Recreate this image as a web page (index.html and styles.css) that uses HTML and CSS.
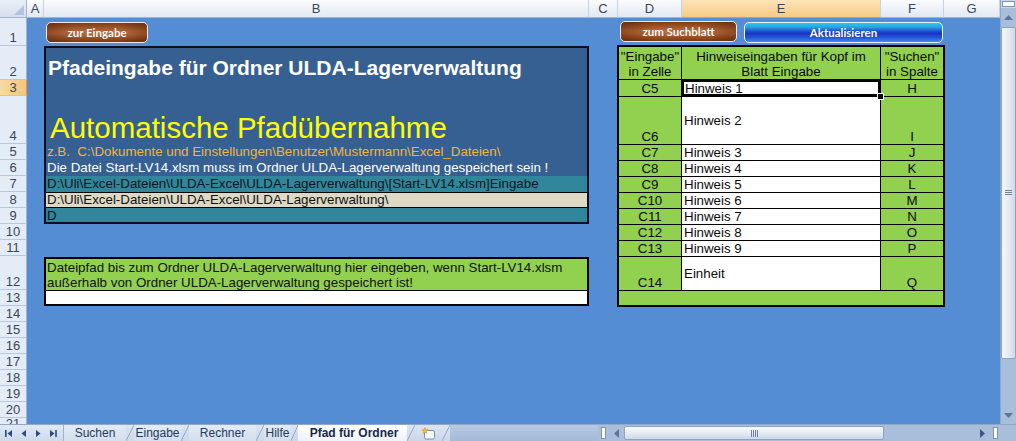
FILE: index.html
```html
<!DOCTYPE html>
<html lang="de">
<head>
<meta charset="utf-8">
<title>Pfad für Ordner</title>
<link rel="stylesheet" href="styles.css">
</head>
<body>
<div class="excel">
  <div class="main">
    <div class="sheet">
      <div class="corner"><span class="corner-tri"></span></div>
      <div class="ch">A</div>
      <div class="ch">B</div>
      <div class="ch">C</div>
      <div class="ch">D</div>
      <div class="ch sel">E</div>
      <div class="ch">F</div>
      <div class="ch">G</div>

      <div class="rh">1</div>
      <div class="rh">2</div>
      <div class="rh sel">3</div>
      <div class="rh">4</div>
      <div class="rh">5</div>
      <div class="rh">6</div>
      <div class="rh">7</div>
      <div class="rh">8</div>
      <div class="rh">9</div>
      <div class="rh">10</div>
      <div class="rh">11</div>
      <div class="rh">12</div>
      <div class="rh">13</div>
      <div class="rh">14</div>
      <div class="rh">15</div>
      <div class="rh">16</div>
      <div class="rh">17</div>
      <div class="rh">18</div>
      <div class="rh">19</div>
      <div class="rh">20</div>
      <div class="rh rh-cut">21</div>

      <div class="btn-left-cell">
        <div class="btn btn-brown btn-eingabe">zur Eingabe</div>
      </div>
      <div class="btn-right-cell">
        <div class="btn btn-brown btn-such">zum Suchblatt</div>
        <div class="btn btn-blue btn-akt">Aktualisieren</div>
      </div>

      <div class="panel">
        <div class="p-title">Pfadeingabe für Ordner ULDA-Lagerverwaltung</div>
        <div class="p-gap"></div>
        <div class="p-big">Automatische Pfadübernahme</div>
        <div class="p-line p-orange">z.B.&nbsp; C:\Dokumente und Einstellungen\Benutzer\Mustermann\Excel_Dateien\</div>
        <div class="p-line p-white">Die Datei Start-LV14.xlsm muss im Ordner ULDA-Lagerverwaltung gespeichert sein !</div>
        <div class="p-line p-teal">D:\Uli\Excel-Dateien\ULDA-Excel\ULDA-Lagerverwaltung\[Start-LV14.xlsm]Eingabe</div>
        <div class="p-line p-beige">D:\Uli\Excel-Dateien\ULDA-Excel\ULDA-Lagerverwaltung\</div>
        <div class="p-line p-teal p-last">D</div>
      </div>

      <div class="note">
        <div class="note-text">Dateipfad bis zum Ordner ULDA-Lagerverwaltung hier eingeben, wenn Start-LV14.xlsm<br>außerhalb von Ordner ULDA-Lagerverwaltung gespeichert ist!</div>
        <div class="note-input"></div>
      </div>

      <div class="tbl">
        <div class="tc th">"Eingabe"<br>in Zelle</div>
        <div class="tc th">Hinweiseingaben für Kopf im<br>Blatt Eingabe</div>
        <div class="tc th">"Suchen"<br>in Spalte</div>

        <div class="tc tk">C5</div><div class="tc tv sel">Hinweis 1</div><div class="tc tk">H</div>
        <div class="tc tk">C6</div><div class="tc tv mid">Hinweis 2</div><div class="tc tk">I</div>
        <div class="tc tk">C7</div><div class="tc tv">Hinweis 3</div><div class="tc tk">J</div>
        <div class="tc tk">C8</div><div class="tc tv">Hinweis 4</div><div class="tc tk">K</div>
        <div class="tc tk">C9</div><div class="tc tv">Hinweis 5</div><div class="tc tk">L</div>
        <div class="tc tk">C10</div><div class="tc tv">Hinweis 6</div><div class="tc tk">M</div>
        <div class="tc tk">C11</div><div class="tc tv">Hinweis 7</div><div class="tc tk">N</div>
        <div class="tc tk">C12</div><div class="tc tv">Hinweis 8</div><div class="tc tk">O</div>
        <div class="tc tk">C13</div><div class="tc tv">Hinweis 9</div><div class="tc tk">P</div>
        <div class="tc tk">C14</div><div class="tc tv mid">Einheit</div><div class="tc tk">Q</div>
        <div class="tc tfoot"></div>
      </div>
    </div>

    <div class="vscroll">
      <div class="vs-split"><span></span></div>
      <div class="vs-arrow"><svg width="9" height="5" viewBox="0 0 9 5"><path d="M0 5 L4.5 0 L9 5 Z" fill="#5C7598"/></svg></div>
      <div class="vs-thumb"><span class="grip-h"></span></div>
      <div class="vs-track"></div>
      <div class="vs-arrow"><svg width="9" height="5" viewBox="0 0 9 5"><path d="M0 0 L4.5 5 L9 0 Z" fill="#5C7598"/></svg></div>
    </div>
  </div>

  <div class="bottombar">
    <div class="tabnav">
      <svg width="8" height="9" viewBox="0 0 8 9"><rect x="0" y="1" width="1.6" height="7" fill="#2D4C7C"/><path d="M7 1 L2.5 4.5 L7 8 Z" fill="#2D4C7C"/></svg>
      <svg width="6" height="9" viewBox="0 0 6 9"><path d="M5 1 L0.5 4.5 L5 8 Z" fill="#2D4C7C"/></svg>
      <svg width="6" height="9" viewBox="0 0 6 9"><path d="M1 1 L5.5 4.5 L1 8 Z" fill="#2D4C7C"/></svg>
      <svg width="8" height="9" viewBox="0 0 8 9"><path d="M1 1 L5.5 4.5 L1 8 Z" fill="#2D4C7C"/><rect x="6.2" y="1" width="1.6" height="7" fill="#2D4C7C"/></svg>
    </div>
    <div class="tabs">
      <span class="tab t1">Suchen</span><span class="sep"></span>
      <span class="tab t2">Eingabe</span><span class="sep"></span>
      <span class="tab t3">Rechner</span><span class="sep"></span>
      <span class="tab t4">Hilfe</span><span class="sep sep-short"></span>
      <span class="tab active">Pfad für Ordner</span><span class="sep"></span>
      <span class="tab tnew"><svg width="15" height="13" viewBox="0 0 15 13"><rect x="3.5" y="3.5" width="10" height="8.5" rx="1.5" fill="#F4F6FA" stroke="#7D8CA3"/><path d="M4 0.5 L4.8 2.6 L7 2.8 L5.3 4.2 L5.9 6.4 L4 5.2 L2.1 6.4 L2.7 4.2 L1 2.8 L3.2 2.6 Z" fill="#F2C230" stroke="#C98F12" stroke-width="0.5"/></svg></span><span class="sep"></span>
      <span class="tabfill"></span>
    </div>
    <div class="hscroll">
      <div class="hs-split"><span></span></div>
      <div class="hs-arrow"><svg width="5" height="9" viewBox="0 0 5 9"><path d="M5 0 L0 4.5 L5 9 Z" fill="#5C7598"/></svg></div>
      <div class="hs-thumb"><span class="grip-v"></span></div>
      <div class="hs-track"></div>
      <div class="hs-arrow"><svg width="5" height="9" viewBox="0 0 5 9"><path d="M0 0 L5 4.5 L0 9 Z" fill="#3D5A85"/></svg></div>
      <div class="hs-split"><span></span></div>
    </div>
    <div class="bcorner"></div>
  </div>
</div>
</body>
</html>
```

FILE: styles.css
```css
html, body {
  margin: 0;
  padding: 0;
}
body {
  width: 1016px;
  height: 441px;
  overflow: hidden;
  background: #548DD4;
  font-family: "Liberation Sans", Arial, sans-serif;
}
.excel {
  width: 1016px;
  height: 441px;
  display: flex;
  flex-direction: column;
}
.main {
  display: flex;
  height: 424px;
}

/* ---------- sheet grid ---------- */
.sheet {
  width: 1000px;
  height: 424px;
  display: grid;
  grid-template-columns: 27px 17px 545px 29px 64px 199px 63px 56px;
  grid-template-rows: 18px 28px 34px 16px 48px repeat(7, 16px) 34px repeat(8, 16px) 6px;
  background: #548DD4;
  overflow: hidden;
}
.corner {
  grid-row: 1;
  grid-column: 1;
  background: linear-gradient(#E9EFF7, #D5DFEC);
  border-right: 1px solid #9EB6CE;
  border-bottom: 1px solid #9EB6CE;
  box-sizing: border-box;
  display: flex;
  align-items: flex-end;
  justify-content: flex-end;
  padding: 0 2px 2px 0;
}
.corner-tri {
  width: 0;
  height: 0;
  border-left: 10px solid transparent;
  border-bottom: 10px solid #B3C5DC;
}
.ch {
  grid-row: 1;
  background: linear-gradient(#FAFCFE, #E2E9F2);
  border-right: 1px solid #C4D3E4;
  border-bottom: 1px solid #9EB6CE;
  box-sizing: border-box;
  display: flex;
  align-items: center;
  justify-content: center;
  font-size: 13px;
  color: #3A4658;
}
.ch.sel {
  background: linear-gradient(#FCE4B8, #F6CB84);
  border-bottom-color: #F29536;
}
.rh {
  grid-column: 1;
  background: #E4ECF7;
  border-right: 1px solid #9EB6CE;
  border-bottom: 1px solid #B6C8DD;
  box-sizing: border-box;
  display: flex;
  align-items: flex-end;
  justify-content: center;
  font-size: 13px;
  line-height: 15px;
  color: #3A4658;
}
.rh.sel {
  background: linear-gradient(90deg, #FAD9A2, #F6C579);
  border-right-color: #F29536;
}
.rh-cut {
  align-items: flex-start;
  border-bottom: none;
  line-height: 12px;
}

/* ---------- buttons ---------- */
.btn-left-cell {
  grid-row: 2;
  grid-column: 3;
  display: flex;
  align-items: flex-start;
  padding: 4px 0 0 2px;
}
.btn-right-cell {
  grid-row: 2;
  grid-column: 5 / 8;
  display: flex;
  align-items: flex-start;
  gap: 7px;
  padding: 4px 0 0 2px;
}
.btn {
  height: 21px;
  box-sizing: border-box;
  border: 1px solid #F3E9E2;
  border-radius: 5px;
  color: #FFFFFF;
  font-family: Lato, "Open Sans", sans-serif;
  font-weight: bold;
  font-size: 11.5px;
  display: flex;
  align-items: center;
  justify-content: center;
  text-shadow: 0 0 1px rgba(0,0,0,.3);
}
.btn-brown {
  background:
    linear-gradient(90deg, rgba(60,20,0,.35), rgba(60,20,0,0) 28%, rgba(60,20,0,0) 72%, rgba(60,20,0,.35)),
    linear-gradient(#7F3C14, #B9693A 45%, #B86638 60%, #7A3810);
}
.btn-eingabe {
  width: 102px;
}
.btn-such {
  width: 117px;
  margin-top: -1px;
}
.btn-blue {
  border-color: #E8F4FF;
  background: linear-gradient(#2AC6E6 0%, #29A9E4 20%, #1F55D2 42%, #1A36C4 55%, #2452D8 75%, #3C8BEE 100%);
}
.btn-akt {
  width: 199px;
}

/* ---------- left panel ---------- */
.panel {
  grid-row: 3 / 11;
  grid-column: 3;
  display: grid;
  grid-template-rows: 32px 16px 48px 16px 16px 16px 16px 14px;
  border: 2px solid #0B0F1E;
  box-sizing: border-box;
  background: #366092;
  overflow: hidden;
}
.p-title {
  display: flex;
  align-items: flex-end;
  padding-left: 2px;
  color: #FFFFFF;
  font-weight: bold;
  font-size: 21px;
  line-height: 24px;
  white-space: nowrap;
}
.p-big {
  display: flex;
  align-items: flex-end;
  padding-left: 4px;
  color: #FFFF00;
  font-size: 29.5px;
  line-height: 33px;
  white-space: nowrap;
}
.p-line {
  display: flex;
  align-items: center;
  padding-left: 1px;
  font-size: 13.33px;
  line-height: 16px;
  white-space: nowrap;
}
.p-orange {
  color: #F3B43C;
}
.p-white {
  color: #FFFFFF;
}
.p-teal {
  background: #31869B;
  color: #0E1620;
}
.p-beige {
  background: #DDD9C4;
  color: #111111;
  border-top: 1px solid #000;
  border-bottom: 1px solid #000;
  box-sizing: border-box;
}
.p-last {
  align-items: flex-start;
}

/* ---------- note box ---------- */
.note {
  grid-row: 13 / 15;
  grid-column: 3;
  display: grid;
  grid-template-rows: 32px 1fr;
  border: 2px solid #000;
  box-sizing: border-box;
  margin-top: 1px;
}
.note-text {
  background: #92D050;
  border-bottom: 1px solid #000;
  display: flex;
  align-items: flex-end;
  padding-left: 1px;
  font-size: 13.33px;
  line-height: 15px;
  color: #111;
  white-space: nowrap;
}
.note-input {
  background: #FFFFFF;
}

/* ---------- right table ---------- */
.tbl {
  grid-row: 3 / 15;
  grid-column: 5 / 8;
  display: grid;
  grid-template-columns: 63px 199px 63px;
  grid-template-rows: 33px 17px 48px repeat(7, 16px) 34px 1fr;
  border-top: 1px solid #000;
  border-left: 1px solid #000;
  outline: 1px solid #000;
  box-sizing: border-box;
  background: #92D050;
}
.tc {
  box-sizing: border-box;
  border-right: 1px solid #000;
  border-bottom: 1px solid #000;
  font-size: 13.33px;
  line-height: 15px;
  color: #0A0A0A;
  white-space: nowrap;
  display: flex;
}
.th {
  background: #92D050;
  flex-direction: column;
  align-items: center;
  justify-content: flex-end;
  text-align: center;
}
.tk {
  background: #92D050;
  align-items: flex-end;
  justify-content: center;
}
.tv {
  background: #FFFFFF;
  align-items: flex-end;
  padding-left: 2px;
}
.tv.mid {
  align-items: center;
}
.tv.sel {
  position: relative;
  box-shadow: inset 0 0 0 2px #000;
  padding-left: 3px;
}
.tv.sel::after {
  content: "";
  position: absolute;
  right: -4px;
  bottom: -4px;
  width: 5px;
  height: 5px;
  background: #000;
  border: 1px solid #FFF;
  z-index: 2;
}
.tfoot {
  grid-column: 1 / 4;
  background: #92D050;
}

/* ---------- vertical scrollbar ---------- */
.vscroll {
  width: 16px;
  height: 424px;
  display: flex;
  flex-direction: column;
  background: #A9BEDB;
  border-left: 1px solid #8EA6C8;
  box-sizing: border-box;
}
.vs-split {
  height: 8px;
  display: flex;
  align-items: center;
  justify-content: center;
  background: #C9D7EA;
}
.vs-split span {
  width: 11px;
  height: 4px;
  background: #FFFFFF;
  border: 1px solid #7F95B5;
}
.vs-arrow {
  height: 18px;
  display: flex;
  align-items: center;
  justify-content: center;
}
.vs-thumb {
  height: 330px;
  margin: 1px 0 0 0;
  border: 1px solid #8FA3BF;
  border-radius: 2px;
  background: linear-gradient(90deg, #F5F8FC, #E2E8F1 60%, #CFD9E7);
  display: flex;
  align-items: center;
  justify-content: center;
}
.grip-h {
  width: 7px;
  height: 6px;
  background: repeating-linear-gradient(#6F819C 0 1px, transparent 1px 2px);
}
.vs-track {
  flex: 1;
}

/* ---------- bottom bar ---------- */
.bottombar {
  height: 17px;
  display: flex;
  background: linear-gradient(#C4D3E8, #AFC3DE);
  border-top: 1px solid #8FA7C9;
  box-sizing: border-box;
}
.tabnav {
  width: 63px;
  display: flex;
  align-items: center;
  gap: 8px;
  padding-left: 5px;
  box-sizing: border-box;
  background: linear-gradient(#E1E9F4, #CCDAEC);
}
.tabs {
  width: 535px;
  display: flex;
  align-items: stretch;
  overflow: hidden;
}
.tab {
  display: flex;
  align-items: center;
  justify-content: center;
  font-size: 12px;
  color: #233C5E;
  background: linear-gradient(#E4EBF5, #D2DEEE);
  white-space: nowrap;
  box-sizing: border-box;
}
.t1 { width: 63px; border-left: 1px solid #9FB3CF; }
.t2 { width: 47px; }
.t3 { width: 67px; }
.t4 { width: 27px; }
.tab.active {
  width: 109px;
  padding-left: 3px;
  background: linear-gradient(#FFFFFF, #EEF2F8);
  font-weight: bold;
  color: #16294A;
}
.tnew {
  width: 27px;
  background: linear-gradient(#DCE5F2, #C9D7EA);
}
.sep {
  width: 8px;
  background:
    linear-gradient(to top left, transparent calc(50% - 0.8px), #8EA2BF 50%, transparent calc(50% + 0.8px)),
    linear-gradient(#DCE5F2, #CAD8EA);
}
.sep-short {
  width: 7px;
}
.tabfill {
  flex: 1;
  background: linear-gradient(#B7C9E2, #A3B9D8);
}
.hscroll {
  width: 402px;
  display: flex;
  align-items: center;
  background: #A9BEDB;
}
.hs-split {
  width: 10px;
  height: 100%;
  display: flex;
  align-items: center;
  justify-content: center;
}
.hs-split span {
  width: 3px;
  height: 10px;
  background: #FFFFFF;
  border: 1px solid #7F95B5;
}
.hs-arrow {
  width: 16px;
  height: 100%;
  display: flex;
  align-items: center;
  justify-content: center;
}
.hs-thumb {
  width: 260px;
  height: 14px;
  box-sizing: border-box;
  border: 1px solid #8FA3BF;
  border-radius: 2px;
  background: linear-gradient(#F7F9FC, #E3E9F2 55%, #CCD7E6);
  display: flex;
  align-items: center;
  justify-content: center;
}
.grip-v {
  width: 7px;
  height: 7px;
  background: repeating-linear-gradient(90deg, #6F819C 0 1px, transparent 1px 2px);
}
.hs-track {
  flex: 1;
  height: 100%;
}
.bcorner {
  width: 16px;
  background: #A9BEDB;
}
```
